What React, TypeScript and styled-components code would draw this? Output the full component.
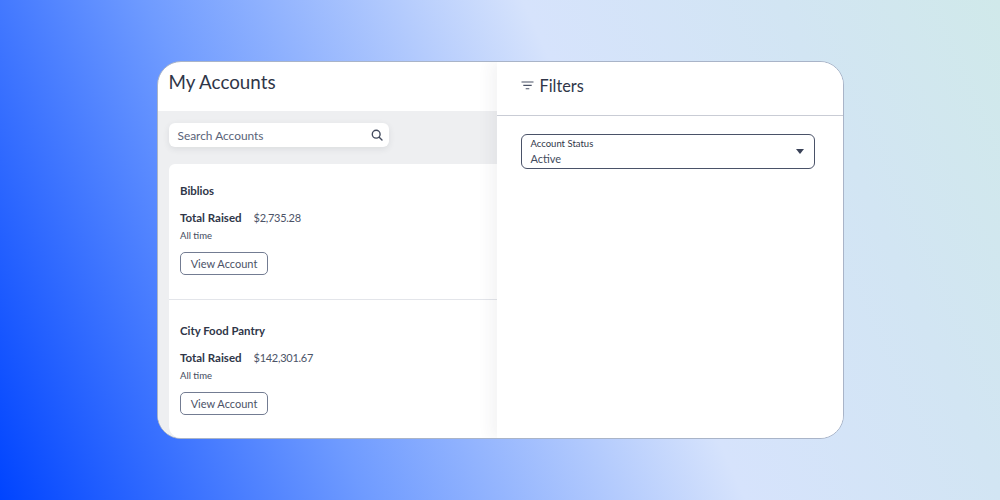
import styled, { createGlobalStyle } from 'styled-components';

const GlobalStyle = createGlobalStyle`
  html, body {
    margin: 0;
    padding: 0;
  }

  body {
    font-family: 'Lato', 'Liberation Sans', sans-serif;
    color: #2f3648;
  }
`;

const Page = styled.main`
  width: 1000px;
  height: 500px;
  box-sizing: border-box;
  padding-top: 61px;
  display: flex;
  align-items: flex-start;
  justify-content: center;
  overflow: hidden;
  background: linear-gradient(66deg, #0044ff 0%, #6f9bff 30%, #d6e3fc 61%, #d2e5f3 82%, #d0e9ea 100%);
`;

const Frame = styled.section`
  width: 687px;
  height: 378px;
  box-sizing: border-box;
  display: flex;
  overflow: hidden;
  background: #fff;
  border: 1px solid #a9b4c8;
  border-radius: 24px;
`;

const AccountsPane = styled.div`
  width: 339px;
  flex: none;
  display: flex;
  flex-direction: column;
`;

const AccountsHeader = styled.header`
  height: 49px;
  flex: none;
  padding-left: 11px;
`;

const Title = styled.h1`
  margin: 0;
  padding-top: 8px;
  font-size: 18.8px;
  line-height: 24px;
  font-weight: 400;
  color: #2f3648;
`;

const AccountsBody = styled.div`
  flex: 1;
  min-height: 0;
  padding: 12px 0 0 11px;
  display: flex;
  flex-direction: column;
  gap: 17px;
  background: #eeeff1;
`;

const SearchBox = styled.div`
  width: 220px;
  height: 24px;
  flex: none;
  box-sizing: border-box;
  padding: 0 6px 0 9px;
  display: flex;
  align-items: center;
  justify-content: space-between;
  background: #fff;
  border-radius: 6px;
  box-shadow: 0 2px 6px rgba(47, 54, 72, 0.1);
`;

const SearchText = styled.span`
  font-size: 11.9px;
  color: #5a6379;
`;

const List = styled.div`
  flex: 1;
  min-height: 0;
  display: flex;
  flex-direction: column;
  background: #fff;
  border-top-left-radius: 6px;
  border-bottom-left-radius: 12px;
`;

const Card = styled.article<{ $height: number; $top: number }>`
  height: ${({ $height }) => $height}px;
  flex: none;
  box-sizing: border-box;
  padding: ${({ $top }) => $top}px 0 0 11.5px;
  & + & {
    border-top: 1px solid #e3e5ea;
  }
`;

const AccountName = styled.h2`
  margin: 0;
  font-size: 11.4px;
  line-height: 14px;
  font-weight: 700;
  color: #2f3648;
`;

const RaisedRow = styled.div`
  margin-top: 13px;
  display: flex;
  gap: 12px;
  font-size: 11.5px;
  line-height: 14px;
`;

const RaisedLabel = styled.span`
  font-weight: 700;
`;

const RaisedValue = styled.span`
  font-size: 11px;
  letter-spacing: -0.28px;
  color: #4b5367;
`;

const Period = styled.p`
  margin: 4px 0 0;
  font-size: 9.5px;
  line-height: 13px;
  color: #434b5e;
`;

const ViewButton = styled.button`
  width: 88px;
  height: 23px;
  margin-top: 10px;
  padding: 0;
  display: block;
  background: #fff;
  border: 1px solid #737c92;
  border-radius: 5px;
  font-family: inherit;
  font-size: 11px;
  color: #4b5367;
`;

const FiltersPane = styled.aside`
  flex: 1;
  min-width: 0;
  position: relative;
  display: flex;
  flex-direction: column;
  background: #fff;
  box-shadow: -6px 0 14px rgba(47, 54, 72, 0.06);
`;

const FiltersHeader = styled.header`
  height: 54px;
  flex: none;
  box-sizing: border-box;
  padding: 0 0 6px 24px;
  display: flex;
  align-items: center;
  gap: 6px;
  border-bottom: 1px solid #c9ccd5;
`;

const FiltersTitle = styled.h2`
  margin: 0;
  font-size: 16.3px;
  font-weight: 400;
  color: #2f3648;
`;

const FiltersBody = styled.div`
  padding: 18px 28px 0 24px;
`;

const StatusSelect = styled.div`
  height: 35px;
  box-sizing: border-box;
  padding: 0 10px 0 9px;
  display: flex;
  align-items: center;
  justify-content: space-between;
  border: 1px solid #4a5268;
  border-radius: 6px;
`;

const StatusText = styled.div`
  display: flex;
  flex-direction: column;
`;

const StatusLabel = styled.span`
  font-size: 9.5px;
  line-height: 12px;
  color: #2f3648;
`;

const StatusValue = styled.span`
  padding-top: 1px;
  font-size: 11px;
  line-height: 15px;
  color: #434b5e;
`;

const Caret = styled.span`
  width: 0;
  height: 0;
  border-left: 4.5px solid transparent;
  border-right: 4.5px solid transparent;
  border-top: 5px solid #3a4258;
`;

function SearchIcon() {
  return (
    <svg width="12" height="12" viewBox="0 0 12 12" fill="none" stroke="#434b5e" strokeWidth="1.4" strokeLinecap="round">
      <circle cx="5.2" cy="5.2" r="3.9" />
      <path d="M8.2 8.2 11 11" />
    </svg>
  );
}

function FilterIcon() {
  return (
    <svg width="13" height="9" viewBox="0 0 13 9" fill="none" stroke="#4b5367" strokeWidth="1.1">
      <path d="M0.5 1h12M2.3 4.4h8.4M4.7 7.8h3.6" />
    </svg>
  );
}

const accounts = [
  { name: 'Biblios', raised: '$2,735.28', height: 135, top: 20 },
  { name: 'City Food Pantry', raised: '$142,301.67', height: 139, top: 24 },
];

export default function App() {
  return (
    <>
      <GlobalStyle />
      <Page>
        <Frame>
          <AccountsPane>
            <AccountsHeader>
              <Title>My Accounts</Title>
            </AccountsHeader>
            <AccountsBody>
              <SearchBox>
                <SearchText>Search Accounts</SearchText>
                <SearchIcon />
              </SearchBox>
              <List>
                {accounts.map((account) => (
                  <Card key={account.name} $height={account.height} $top={account.top}>
                    <AccountName>{account.name}</AccountName>
                    <RaisedRow>
                      <RaisedLabel>Total Raised</RaisedLabel>
                      <RaisedValue>{account.raised}</RaisedValue>
                    </RaisedRow>
                    <Period>All time</Period>
                    <ViewButton>View Account</ViewButton>
                  </Card>
                ))}
              </List>
            </AccountsBody>
          </AccountsPane>
          <FiltersPane>
            <FiltersHeader>
              <FilterIcon />
              <FiltersTitle>Filters</FiltersTitle>
            </FiltersHeader>
            <FiltersBody>
              <StatusSelect>
                <StatusText>
                  <StatusLabel>Account Status</StatusLabel>
                  <StatusValue>Active</StatusValue>
                </StatusText>
                <Caret />
              </StatusSelect>
            </FiltersBody>
          </FiltersPane>
        </Frame>
      </Page>
    </>
  );
}
